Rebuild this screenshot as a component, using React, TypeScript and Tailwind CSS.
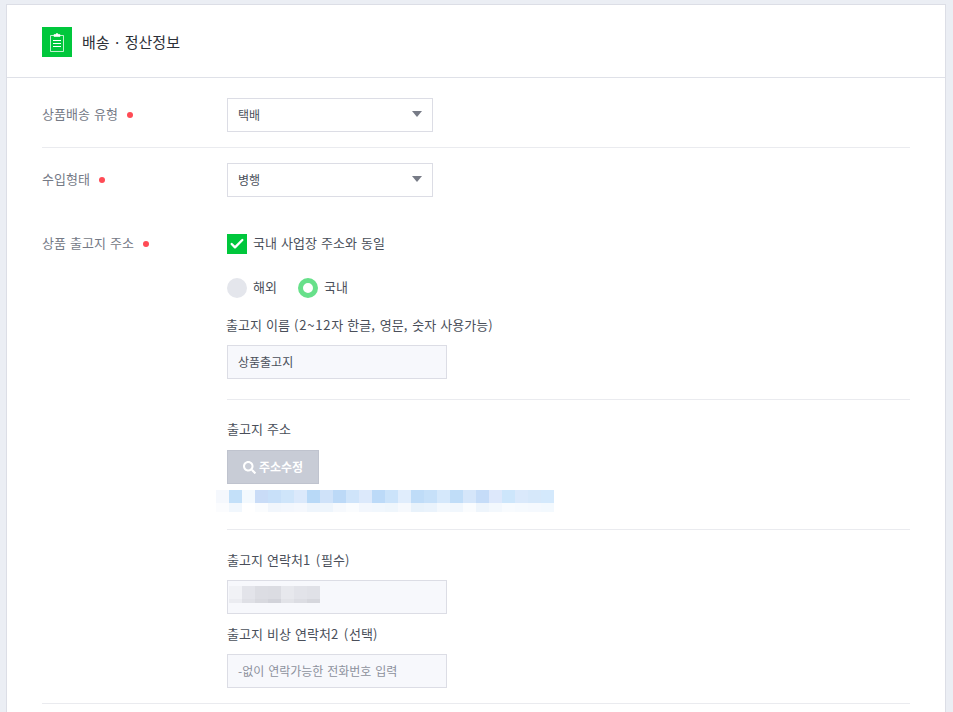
import React from 'react';
import { Check } from 'lucide-react';
import { FaSearch } from 'react-icons/fa';

const topCells = [
  'bg-[#f5f8fd]', 'bg-[#c3e0f9]', 'bg-[#f3f9fe]', 'bg-[#c9dcf7]', 'bg-[#c8e0f9]', 'bg-[#cfe5fa]', 'bg-[#dbe9fb]', 'bg-[#b8d9f7]', 'bg-[#cfe2f9]',
  'bg-[#bcd9f7]', 'bg-[#cfe4fa]', 'bg-[#dce9fb]', 'bg-[#bcdaf8]', 'bg-[#cbe3fa]', 'bg-[#e0edfc]', 'bg-[#bfdcf8]', 'bg-[#c6e0f9]', 'bg-[#d5e8fb]',
  'bg-[#c0ddf8]', 'bg-[#d5e6fa]', 'bg-[#c5dcf8]', 'bg-[#dde8fb]', 'bg-[#cde6fb]', 'bg-[#dae9fb]', 'bg-[#d6e8fa]', 'bg-[#d4e9fc]',
];
const bottomCells = [
  'bg-[#fbfcfe]', 'bg-[#f1f7fd]', 'bg-white', 'bg-[#fafcfe]', 'bg-[#f1f6fc]', 'bg-[#f3f7fd]', 'bg-[#f5f8fd]', 'bg-[#eef5fc]', 'bg-[#eef5fc]',
  'bg-[#f6f9fd]', 'bg-[#fafcfe]', 'bg-[#f3f7fd]', 'bg-[#f1f7fd]', 'bg-[#eff6fc]', 'bg-[#f6f9fd]', 'bg-[#e8f2fb]', 'bg-[#eaf3fc]', 'bg-[#f3f8fd]',
  'bg-[#f1f7fd]', 'bg-[#fafcfe]', 'bg-[#eef5fc]', 'bg-[#f3f8fd]', 'bg-[#f8fbfe]', 'bg-[#f6fafe]', 'bg-[#f5f9fe]', 'bg-[#f3f9fe]',
];
const phoneCells = [
  'bg-[#f1f2f6]', 'bg-[#e3e4ea]', 'bg-[#dcdde3]', 'bg-[#dbdce2]', 'bg-[#e7e8ed]', 'bg-[#e2e3e9]', 'bg-[#e0e1e7]',
];
const phoneBottom = [
  'bg-[#ebecf1]', 'bg-[#dfe0e6]', 'bg-[#d8d9df]', 'bg-[#d2d3da]', 'bg-[#e2e3e8]', 'bg-[#dcdde3]', 'bg-[#d6d7dd]',
];

const Dot = () => <span className="ml-[9px] inline-block w-[6px] h-[6px] rounded-full bg-[#ff4b55]" />;

// latin runs in the reference sit on whole-pixel advances, a little wider than the CJK font's
const Latin = ({ children }: { children: React.ReactNode }) => <span className="tracking-[0.8px]">{children}</span>;

const Select = ({ value }: { value: string }) => (
  <div className="w-[206px] h-[34px] border border-[#dcdde5] bg-white pl-[10px] pr-[10px] flex items-center justify-between text-[12px] text-[#4a4f5a]">
    <span className="-mt-[1px]">{value}</span>
    <span className="-mt-[2px] w-0 h-0 border-l-[5.5px] border-r-[5.5px] border-t-[6px] border-l-transparent border-r-transparent border-t-[#777b86]" />
  </div>
);

const TextBox = ({ children, muted }: { children?: React.ReactNode; muted?: boolean }) => (
  <div className={`w-[220px] h-[34px] border border-[#dcdde5] bg-[#f7f8fc] pl-[10px] flex items-center text-[12px] ${muted ? 'text-[#8d919c]' : 'text-[#4a4f5a]'}`}>
    {children}
  </div>
);

const App: React.FC = () => {
  return (
    <div className="h-screen overflow-hidden bg-[#ebeef4] pt-[4px] pl-[6px] text-[13px] leading-[20px] text-[#4a4f5a] [word-spacing:1.2px] font-['Noto_Sans_CJK_KR','Noto_Sans',sans-serif]">
      <div className="w-[940px] min-h-[800px] bg-white border border-[#dcdee6]">
        {/* Header */}
        <div className="h-[73px] border-b border-[#dfe1e8] pl-[35px] pt-[22px]">
          <div className="flex items-center gap-[10px]">
            <div className="w-[30px] h-[30px] bg-[#00c73c] flex items-center justify-center">
              <svg width="14" height="19" viewBox="0 0 14 19" fill="none" stroke="white">
                <path d="M4 2.5H.5V18.5H13.5V2.5H10" strokeOpacity=".75" />
                <path d="M4 3.5V1.5H5.5C5.8 .3 8.2 .3 8.5 1.5H10V3.5Z" fill="white" strokeWidth=".6" />
                <path d="M3 7.5H11M3 10.5H11M3 13.5H11" />
              </svg>
            </div>
            <h2 className="text-[15px] text-[#2d3038] font-normal [word-spacing:0]">배송 · 정산정보</h2>
          </div>
        </div>

        <div className="pl-[35px] pr-[35px]">
          {/* Delivery type */}
          <div className="flex pt-[20px] pb-[15px] border-b border-[#eaebef]">
            <div className="w-[185px] h-[34px] flex items-center text-[#757a86]"><span className="-mt-[2px]">상품배송 유형</span><Dot /></div>
            <Select value="택배" />
          </div>

          {/* Import type */}
          <div className="flex pt-[15px]">
            <div className="w-[185px] h-[34px] flex items-center text-[#757a86]"><span className="-mt-[2px]">수입형태</span><Dot /></div>
            <Select value="병행" />
          </div>

          {/* Shipping address */}
          <div className="flex pt-[37px] border-b border-[#eaebef] pb-[15px]">
            <div className="w-[185px] h-[20px] flex items-center text-[#757a86]"><span className="-mt-[2px]">상품 출고지 주소</span><Dot /></div>
            <div className="flex-1">
              <div className="flex items-center gap-[6px] h-[20px]">
                <span className="w-[20px] h-[20px] bg-[#00c73c] flex items-center justify-center">
                  <Check size={16} strokeWidth={3.5} color="white" />
                </span>
                <span className="-mt-[2px]">국내 사업장 주소와 동일</span>
              </div>

              <div className="flex items-center mt-[24px] h-[20px]">
                <span className="w-[20px] h-[20px] rounded-full bg-[#e4e6ec]" />
                <span className="ml-[6px] -mt-[2px]">해외</span>
                <span className="ml-[21px] w-[20px] h-[20px] rounded-full border-[5px] border-[#67e08a] bg-white" />
                <span className="ml-[6px] -mt-[2px]">국내</span>
              </div>

              <div className="mt-[17px] -ml-[1px]">출고지 이름 <Latin>(2~12</Latin>자 한글<Latin>,</Latin> 영문<Latin>,</Latin> 숫자 사용가능<Latin>)</Latin></div>
              <div className="mt-[10px]"><TextBox>상품출고지</TextBox></div>

              <div className="mt-[20px] border-t border-[#eaebef] pt-[19px]">출고지 주소</div>
              <button className="mt-[11px] w-[92px] h-[34px] bg-[#c8ccd6] border border-[#bfc3ce] text-white font-bold flex items-center justify-center gap-[3px] text-[12px]">
                <FaSearch size={13} />
                주소수정
              </button>

              {/* Blurred address */}
              <div className="mt-[6px] -ml-[11px] w-[338px]">
                <div className="grid grid-cols-[repeat(26,13px)] h-[13px]">
                  {topCells.map((c, i) => <div key={i} className={c} />)}
                </div>
                <div className="grid grid-cols-[repeat(26,13px)] h-[9px]">
                  {bottomCells.map((c, i) => <div key={i} className={c} />)}
                </div>
              </div>

              <div className="mt-[17px] border-t border-[#eaebef] pt-[20px]">출고지 연락처<Latin>1 (</Latin>필수<Latin>)</Latin></div>
              <div className="mt-[10px]">
                <div className="relative">
                  <TextBox />
                  <div className="absolute left-[2px] top-[6px]">
                    <div className="grid grid-cols-[repeat(7,13px)] h-[13px]">
                      {phoneCells.map((c, i) => <div key={i} className={c} />)}
                    </div>
                    <div className="grid grid-cols-[repeat(7,13px)] h-[4px]">
                      {phoneBottom.map((c, i) => <div key={i} className={c} />)}
                    </div>
                  </div>
                </div>
              </div>
              <div className="mt-[10px]">출고지 비상 연락처<Latin>2 (</Latin>선택<Latin>)</Latin></div>
              <div className="mt-[10px]"><TextBox muted>-없이 연락가능한 전화번호 입력</TextBox></div>
            </div>
          </div>
        </div>
      </div>
    </div>
  );
};

export default App;
